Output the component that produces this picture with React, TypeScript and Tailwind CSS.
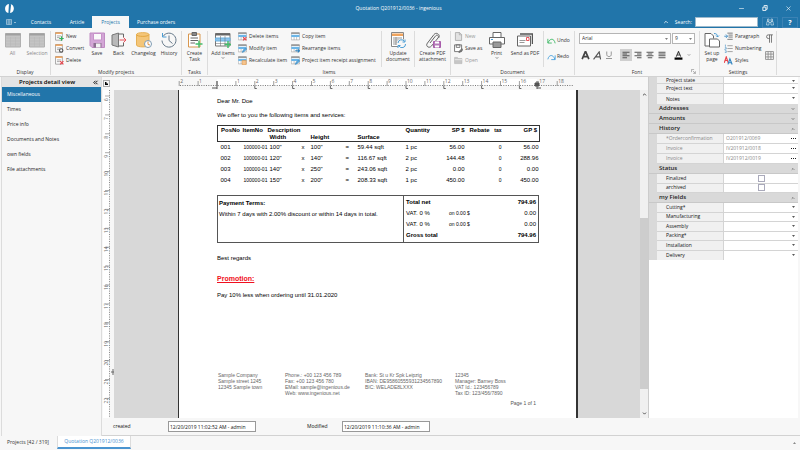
import type { ReactNode } from "react";
import { ChevronDown, ChevronUp, ChevronsLeft, Minus, X } from "lucide-react";

interface IconProps {
  children: ReactNode;
  className?: string;
}

function Icon({ children, className = "size-4" }: IconProps) {
  return (
    <svg viewBox="0 0 32 32" fill="none" stroke="#666" strokeWidth="2" className={`${className} shrink-0`} aria-hidden="true">
      {children}
    </svg>
  );
}

const GreyTable = () => (
  <Icon>
    <path d="M1 3h30v27H1z" fill="#c4c4c4" stroke="#b0b0b0" />
    <path d="M1 5h30" stroke="#a0a0a0" strokeWidth="4" />
    <path d="M1 12h30M1 18h30M1 24h30M11 10v20M21 10v20" stroke="#b6b6b6" strokeWidth="1" />
  </Icon>
);

const SaveIcon = () => (
  <Icon>
    <path d="M2 2h29v29H6l-4-4z" fill="#d3a6d6" stroke="#c08cc3" />
    <path d="M9 3h16v13H9z" fill="#fafafa" stroke="#c792c9" />
    <path d="M9 22h16v9H9z" fill="#8d6f90" stroke="none" />
    <path d="M14 23h9v8h-9z" fill="#f3f3f3" stroke="none" />
  </Icon>
);

const BackIcon = () => (
  <Icon>
    <path d="M16 4h9v7M25 21v7h-9" />
    <path d="M2 6l13-4v28L2 26z" fill="#b9b9b9" stroke="#777" />
    <path d="M17 16h13M25 11l5 5-5 5" stroke="#e8555c" />
  </Icon>
);

const ChangelogIcon = () => (
  <Icon>
    <path d="M1 5c0-5 25-5 25 0v21c0 5-25 5-25 0z" fill="#f4c679" stroke="#e6b055" />
    <path d="M1 5c0 5 25 5 25 0" stroke="#e3a63e" />
    <circle cx="24" cy="24" r="7" fill="#fff" stroke="#7f9bb3" />
    <path d="M24 19v6l4 1" stroke="#e3943e" />
  </Icon>
);

const HistoryIcon = () => (
  <Icon>
    <path d="M4 9a14 14 0 1 1-2 8" stroke="#66798a" />
    <path d="M3 2v8h8" stroke="#4b9dd4" />
    <path d="M16 7v10l7 6" stroke="#66798a" />
  </Icon>
);

const CreateTaskIcon = () => (
  <Icon>
    <path d="M3 4h23v26H3z" fill="#fff" stroke="#d8974f" />
    <path d="M10 1h9v6h-9z" fill="#888" />
    <path d="M7 12h15M7 17h15M7 22h9" />
    <path d="M24 17v14M17 24h14" stroke="#45bd6c" strokeWidth="3" />
  </Icon>
);

const AddItemsIcon = () => (
  <Icon>
    <path d="M1 3h29v25H1z" fill="#fff" stroke="#777" />
    <path d="M1 5h29" stroke="#666" strokeWidth="4" />
    <path d="M1 12h29v6H1z" fill="#8cc5ec" stroke="#6bb0e0" />
    <path d="M1 23h29M11 8v20M20 8v20" strokeWidth="1" />
    <path d="M26 18v14M19 25h14" stroke="#45bd6c" strokeWidth="3" />
  </Icon>
);

const UpdateIcon = () => (
  <Icon>
    <path d="M3 1h24v28H3z" fill="#fff" stroke="#888" />
    <path d="M4 3h22v5H4z" fill="#f0a45e" stroke="none" />
    <path d="M6 12h18M6 16h18M6 20h9M6 24h7M12 10v16" stroke="#999" />
    <circle cx="23" cy="23" r="9" fill="#f7f7f7" stroke="none" />
    <path d="M16 22a7 7 0 0 1 13-3m1-4v5h-5M31 24a7 7 0 0 1-13 4m-2 4v-5h5" stroke="#4b9dd4" />
  </Icon>
);

const ClipIcon = () => (
  <Icon>
    <path d="M10 22L21 8c3-4 8 0 5 4L13 28c-5 6-13 0-8-6L18 5c5-6 14 1 9 7" />
    <path d="M17 19h14v12H17z" fill="#b57ab8" stroke="#a85cab" />
    <path d="M20 19h8v4h-8zM20 27h8v4h-8z" fill="#fff" stroke="none" />
  </Icon>
);

const PrintIcon = () => (
  <Icon>
    <path d="M8 11V1h16v10" fill="#fff" />
    <path d="M1 11h30v13H1z" fill="#fff" />
    <path d="M8 20h16v11H8z" fill="#999" />
    <path d="M4 15h4" stroke="#4b9dd4" />
  </Icon>
);

const SendIcon = () => (
  <Icon>
    <path d="M6 4h25v20" strokeWidth="3" stroke="#555" />
    <path d="M1 8h26v20H1z" fill="#fff" />
    <path d="M5 17h12M5 21h10" stroke="#999" />
    <path d="M19 11h5v6h-5z" fill="#fff" stroke="#e8555c" />
  </Icon>
);

const PageSetupIcon = () => (
  <Icon>
    <path d="M11 28H2V3h12l5 5v5" fill="#fff" />
    <path d="M20 3c5 0 7 2 7 7m-3-3l3 3 3-3" stroke="#4b9dd4" />
    <path d="M11 14h16l4 4v12H11z" fill="#fff" />
  </Icon>
);

function FormIcon({ children }: { children: ReactNode }) {
  return (
    <Icon className="size-[9px]">
      <path d="M2 2h24v27H2z" fill="#fff" stroke="#999" strokeWidth="3" />
      <path d="M1 4h26" stroke="#ef9b4d" strokeWidth="5" />
      <path d="M7 14h14M7 20h10" strokeWidth="3" stroke="#999" />
      {children}
    </Icon>
  );
}

function ItemIcon({ children }: { children: ReactNode }) {
  return (
    <Icon className="size-[9px]">
      <path d="M1 3h29v25H1z" fill="#fff" stroke="#999" strokeWidth="2" />
      <path d="M1 4h29" stroke="#777" strokeWidth="4" />
      <path d="M1 14h29" stroke="#6cb6e8" strokeWidth="8" />
      <path d="M11 18v10M20 18v10" stroke="#999" />
      {children}
    </Icon>
  );
}

const greenPlus = <path d="M23 15v16M15 23h16" stroke="#31b45b" strokeWidth="4" />;
const redCross = <path d="M18 18l12 12M30 18L18 30" stroke="#e8454c" strokeWidth="4" />;
const gear = <circle cx="22" cy="23" r="6" fill="#fff" stroke="#555" strokeWidth="4" />;
const bluePen = <path d="M15 30l3-7 9-9 4 4-9 9z" fill="#5daee3" stroke="#2f83bf" />;
const orangePen = <path d="M15 16h14v15H15z" fill="#f6c48d" stroke="#e09544" />;
const blueArrows = <path d="M15 24h14m-5-6l6 6-6 6" stroke="#2f83bf" strokeWidth="4" />;

const NewDoc = () => (
  <Icon className="size-[9px]">
    <path d="M5 2h15l7 7v21H5z" fill="#e2e2e2" stroke="#aaa" strokeWidth="3" />
    <path d="M19 2v8h8" stroke="#999" />
  </Icon>
);

const SaveAs = () => (
  <Icon className="size-[9px]">
    <path d="M2 3h25v24H2z" fill="#fff" strokeWidth="3" />
    <path d="M8 3h13v9H8z" strokeWidth="3" />
    <path d="M17 31l3-7 8-8 4 4-8 8z" fill="#777" />
  </Icon>
);

const OpenFolder = () => (
  <Icon className="size-[9px]">
    <path d="M2 5h10l3 4h13v18H2z" fill="#c6c6c6" stroke="#b0b0b0" />
    <path d="M3 13h26" stroke="#eee" strokeWidth="3" />
  </Icon>
);

interface SmallItem {
  label: string;
  icon: ReactNode;
  muted?: boolean;
}

const projectActions: SmallItem[] = [
  { label: "New", icon: <FormIcon>{greenPlus}</FormIcon> },
  { label: "Convert", icon: <FormIcon>{gear}</FormIcon> },
  { label: "Delete", icon: <FormIcon>{redCross}</FormIcon> },
];

const itemActions: SmallItem[] = [
  { label: "Delete items", icon: <ItemIcon>{redCross}</ItemIcon> },
  { label: "Modify item", icon: <ItemIcon>{bluePen}</ItemIcon> },
  { label: "Recalculate item", icon: <ItemIcon>{orangePen}</ItemIcon> },
];

const itemTools: SmallItem[] = [
  { label: "Copy item", icon: <ItemIcon>{null}</ItemIcon> },
  { label: "Rearrange items", icon: <ItemIcon>{blueArrows}</ItemIcon> },
  { label: "Project item receipt assignment", icon: <ItemIcon>{bluePen}</ItemIcon> },
];

const documentActions: SmallItem[] = [
  { label: "New", icon: <NewDoc />, muted: true },
  { label: "Save as", icon: <SaveAs /> },
  { label: "Open", icon: <OpenFolder />, muted: true },
];

const settingActions: SmallItem[] = [
  {
    label: "Paragraph",
    icon: (
      <Icon className="size-[9px]">
        <path d="M12 4h19M16 11h15M16 18h15M12 26h19" strokeWidth="3" />
        <path d="M1 15h11M7 9l6 6-6 6" stroke="#2f83bf" strokeWidth="3" />
      </Icon>
    ),
  },
  {
    label: "Numbering",
    icon: (
      <Icon className="size-[9px]">
        <path d="M12 6h19M12 16h19M12 27h19" strokeWidth="2" />
        <path d="M5 2v8M3 13h5v5H3v3M3 24h5v6H3" stroke="#2f83bf" />
      </Icon>
    ),
  },
  {
    label: "Styles",
    icon: (
      <Icon className="size-[9px]">
        <path d="M1 24L8 3l7 21M4 16h9" stroke="#e8454c" strokeWidth="4" />
        <path d="M14 30l7-20 8 20M17 24h10" stroke="#2f83bf" strokeWidth="4" />
      </Icon>
    ),
  },
];

function SmallButtons({ items, className }: { items: SmallItem[]; className: string }) {
  return (
    <div className={`${className} flex shrink-0 flex-col`}>
      {items.map((item) => (
        <button key={item.label} type="button" className={`flex h-3 items-center gap-[2px] whitespace-nowrap ${item.muted ? "text-[#999]" : ""}`}>
          {item.icon}
          {item.label}
        </button>
      ))}
    </div>
  );
}

interface BigButtonProps {
  icon: ReactNode;
  lines: string[];
  className: string;
  menu?: boolean;
}

function BigButton({ icon, lines, className, menu }: BigButtonProps) {
  return (
    <button type="button" className={`${className} flex shrink-0 flex-col items-center pt-[2px]`}>
      {icon}
      <span className="mt-[2px] flex flex-col items-center leading-[6px] whitespace-nowrap">
        {lines.map((line) => (
          <span key={line}>{line}</span>
        ))}
      </span>
      {menu && <ChevronDown className="size-1 text-[#555]" strokeWidth={4} />}
    </button>
  );
}

function Group({ name, children, className = "" }: { name: string; children: ReactNode; className?: string }) {
  return (
    <section aria-label={name} className={`${className} flex shrink-0 flex-col`}>
      <div className="flex h-[38px]">{children}</div>
      <div className="text-center leading-[8px]">{name}</div>
    </section>
  );
}

const Separator = () => <div className="my-[1px] w-px shrink-0 bg-[#dcdcdc]" />;

function AlignIcon({ d }: { d: string }) {
  return (
    <Icon className="size-2">
      <path d={d} stroke="#555" strokeWidth="4" />
    </Icon>
  );
}

function FontGroup() {
  return (
    <Group name="Font" className="w-[124px]">
      <div className="flex flex-1 flex-col px-1 pt-[3px]">
        <div className="flex gap-px">
          <div className="relative flex-1">
            <select aria-label="Font family" className="block h-[11px] w-full appearance-none border border-[#b5b5b5] bg-white px-[2px] text-[5px]">
              <option>Arial</option>
            </select>
            <svg viewBox="0 0 4 2" className="pointer-events-none absolute top-[5px] right-[3px] h-[2px] w-[3px]">
              <path d="M0 0h4L2 2z" fill="#555" />
            </svg>
          </div>
          <div className="relative w-[23px]">
            <select aria-label="Font size" className="block h-[11px] w-full appearance-none border border-[#b5b5b5] bg-white px-[2px] text-[5px]">
              <option>9</option>
            </select>
            <svg viewBox="0 0 4 2" className="pointer-events-none absolute top-[5px] right-[3px] h-[2px] w-[3px]">
              <path d="M0 0h4L2 2z" fill="#555" />
            </svg>
          </div>
        </div>
        <div className="mt-[5px] flex h-3 items-center pl-[2px]">
          <button type="button" aria-label="Bold" className="flex w-3">
            <Icon className="size-[9px]"><path d="M4 29L15 3h2l11 26M8 20h15" stroke="#444" strokeWidth="6" /></Icon>
          </button>
          <button type="button" aria-label="Italic" className="flex w-3">
            <Icon className="size-[9px]"><path d="M2 30L22 3l5 27M10 21h15" stroke="#555" strokeWidth="4" /></Icon>
          </button>
          <button type="button" aria-label="Underline" className="flex w-[15px]">
            <Icon className="size-2"><path d="M7 2v12c0 11 18 11 18 0V2M4 30h24" stroke="#777" strokeWidth="3" /></Icon>
          </button>
          <button type="button" aria-label="Align left" className="flex size-3 items-center justify-center bg-[#cfcfcf]">
            <AlignIcon d="M2 5h28M2 12h18M2 19h28M2 27h18" />
          </button>
          <button type="button" aria-label="Align right" className="flex w-3 justify-center"><AlignIcon d="M2 5h28M12 12h18M2 19h28M12 27h18" /></button>
          <button type="button" aria-label="Center" className="flex w-3 justify-center"><AlignIcon d="M2 5h28M7 12h18M2 19h28M7 27h18" /></button>
          <button type="button" aria-label="Justify" className="flex w-3 justify-center"><AlignIcon d="M2 5h28M2 12h28M2 19h28M2 27h28" /></button>
          <button type="button" aria-label="Font color" className="ml-auto flex items-center gap-1 pr-1">
            <Icon className="size-[9px]"><path d="M8 20L16 2l8 18M11 14h10" stroke="#444" strokeWidth="4" /><path d="M2 27h28" stroke="#000" strokeWidth="8" /></Icon>
            <ChevronDown className="size-1 text-[#777]" strokeWidth={4} />
          </button>
        </div>
      </div>
    </Group>
  );
}

function Ribbon() {
  return (
    <div className="flex h-[49px] shrink-0 overflow-hidden border-b border-[#d2d2d2] bg-[#f7f7f7] pt-[2px] text-[#333]">
      <Group name="Display">
        <div className="flex pl-px text-[#888]">
          <BigButton className="w-[23px]" icon={<GreyTable />} lines={["All"]} />
          <BigButton className="w-[26px]" icon={<GreyTable />} lines={["Selection"]} />
        </div>
      </Group>
      <Separator />
      <Group name="Modify projects">
        <SmallButtons className="w-[36px] pl-1" items={projectActions} />
        <BigButton className="w-[20px]" icon={<SaveIcon />} lines={["Save"]} />
        <BigButton className="w-[23px]" icon={<BackIcon />} lines={["Back"]} />
        <BigButton className="w-[27px]" icon={<ChangelogIcon />} lines={["Changelog"]} />
        <BigButton className="w-[24px]" icon={<HistoryIcon />} lines={["History"]} />
      </Group>
      <Separator />
      <Group name="Tasks">
        <BigButton className="w-[25px]" icon={<CreateTaskIcon />} lines={["Create", "Task"]} />
      </Group>
      <Separator />
      <Group name="Items">
        <BigButton className="w-[30px]" icon={<AddItemsIcon />} lines={["Add items"]} menu />
        <SmallButtons className="w-[53px]" items={itemActions} />
        <SmallButtons className="w-[90px]" items={itemTools} />
        <Separator />
        <BigButton className="w-[32px]" icon={<UpdateIcon />} lines={["Update", "document"]} />
        <Separator />
        <BigButton className="w-[35px]" icon={<ClipIcon />} lines={["Create PDF", "attachment"]} />
      </Group>
      <Separator />
      <Group name="Document">
        <SmallButtons className="w-[35px] pl-[3px]" items={documentActions} />
        <BigButton className="w-[21px]" icon={<PrintIcon />} lines={["Print"]} menu />
        <BigButton className="w-[36px]" icon={<SendIcon />} lines={["Send as PDF"]} />
        <Separator />
        <div className="flex w-[30px] flex-col gap-1 pt-1 pl-[3px]">
          <button type="button" className="flex h-3 items-center gap-px">
            <Icon className="size-[9px]"><path d="M3 10v15h14M4 24C10 8 25 6 29 26" stroke="#31b45b" strokeWidth="3" /></Icon>
            Undo
          </button>
          <button type="button" className="flex h-3 items-center gap-px">
            <Icon className="size-[9px]"><path d="M29 12v15H15M28 26C22 8 7 8 3 26" stroke="#3f9bdb" strokeWidth="3" /></Icon>
            Redo
          </button>
        </div>
      </Group>
      <Separator />
      <FontGroup />
      <button type="button" aria-label="Font settings" className="-ml-2 mb-[2px] flex w-2 items-end">
        <Icon className="size-[5px]"><path d="M3 20V3h17M12 12l16 16M28 14v14H14" strokeWidth="3" /></Icon>
      </button>
      <Separator />
      <Group name="Settings">
        <BigButton className="w-[24px]" icon={<PageSetupIcon />} lines={["Set up", "page"]} />
        <SmallButtons className="w-[38px]" items={settingActions} />
        <div className="flex w-[14px] flex-col items-center gap-2 pt-1">
          <button type="button" aria-label="Formatting marks" className="flex">
            <Icon className="size-[9px]"><path d="M28 3H12a6 6 0 0 0 0 13h4M16 3v28M23 3v28" strokeWidth="3" /></Icon>
          </button>
          <button type="button" aria-label="Grid lines" className="flex">
            <Icon className="size-[9px]"><path d="M2 2h28v28H2zM2 11h28M2 21h28M11 2v28M21 2v28" strokeWidth="3" stroke="#888" /></Icon>
          </button>
        </div>
      </Group>
      <Separator />
    </div>
  );
}

const tabs = [
  { name: "Contacts", className: "w-[42px]" },
  { name: "Article", className: "w-[30px]" },
  { name: "Projects", className: "w-[37px] bg-[#f7f7f7] text-[#2175aa]" },
  { name: "Purchase orders", className: "w-[54px]" },
];

function TitleBar() {
  return (
    <header className="shrink-0 bg-[#2175aa] text-white">
      <div className="flex h-4 items-center">
        <div className="flex-1 pl-[5px]">
          <svg viewBox="0 0 16 16" className="size-[9px]" aria-hidden="true">
            <path d="M7 0C-2 1-2 15 6 16zM9 0c9 1 9 15 0 16L11 0z" fill="#fff" />
          </svg>
        </div>
        <h1 className="text-[5px]">Quotation Q201912/0036 - ingenious</h1>
        <div className="flex flex-1 justify-end gap-[17px] pr-2">
          <button type="button" aria-label="Minimize"><Minus className="size-[7px]" /></button>
          <button type="button" aria-label="Restore">
            <svg viewBox="0 0 14 14" className="size-[6px]" fill="none" stroke="#fff" strokeWidth="2">
              <path d="M2 5h7v8H2zM5 4V1h7v9H9" />
            </svg>
          </button>
          <button type="button" aria-label="Close"><X className="size-[7px]" /></button>
        </div>
      </div>
      <div className="flex h-3 items-stretch">
        <button type="button" aria-label="Menu" className="flex w-5 items-center gap-[2px] pl-[6px]">
          <svg viewBox="0 0 12 12" className="size-[6px]" fill="none" stroke="#e5edf3"><path d="M1 1h10v10H1zM6 1v10M1 4h10M1 8h10" /></svg>
          <svg viewBox="0 0 4 2" className="h-px w-[2px]"><path d="M0 0h4L2 2z" fill="#fff" /></svg>
        </button>
        <nav className="flex flex-1">
          {tabs.map((tab) => (
            <a key={tab.name} href="#" className={`${tab.className} flex items-center justify-center whitespace-nowrap`}>
              {tab.name}
            </a>
          ))}
        </nav>
        <div className="flex items-center pr-[2px]">
          <ChevronUp className="mr-[6px] size-[6px]" strokeWidth={3} />
          <label htmlFor="search" className="mr-[3px]">Search:</label>
          <input id="search" type="text" className="h-[10px] w-[63px] border border-[#9db9cc] bg-white" />
          <button type="button" aria-label="Find" className="ml-1 flex h-[11px] w-4 items-center justify-center border border-[#3b82b4]">
            <svg viewBox="0 0 16 16" className="size-2" fill="none" stroke="#fff" strokeWidth="1">
              <path d="M3 2h3v4H3zM10 2h3v4h-3zM2 7h4v7H1zM10 7h4l1 7h-5zM6 9h4" />
            </svg>
          </button>
          <button type="button" aria-label="Help" className="ml-1 h-[11px] w-4 border border-[#3b82b4] text-[7px] leading-none font-bold">?</button>
        </div>
      </div>
    </header>
  );
}

const views = ["Miscellaneous", "Times", "Price info", "Documents and Notes", "own fields", "File attachments"];

function Sidebar() {
  return (
    <aside className="ml-px flex w-[101px] shrink-0 flex-col border-x border-[#dcdcdc]">
      <div className="flex h-[10px] items-center bg-[#e4e4e4] pr-[2px] text-black">
        <h2 className="flex-1 text-center text-[6px] font-semibold">Projects detail view</h2>
        <ChevronsLeft className="size-[7px]" strokeWidth={3} />
      </div>
      {views.map((view, index) => (
        <a key={view} href="#" className={`flex h-[15px] items-center pl-[5px] ${index === 0 ? "bg-[#2175aa] text-white" : "text-[#222]"}`}>
          {view}
        </a>
      ))}
    </aside>
  );
}

function HorizontalRuler() {
  const marks = Array.from({ length: 21 }, (_, i) => i - 2);
  return (
    <svg viewBox="0 0 397 13" className="h-[13px] w-[397px]" aria-hidden="true">
      <rect x="39" y="2" width="320" height="7" fill="#fff" />
      <path d="M2 8.5h394" stroke="#777" strokeDasharray="1 1.36" />
      {marks.map((n) => {
        const x = 39 + n * 18.9;
        return (
          <g key={n}>
            <path d={`M${x} 4v5`} stroke="#777" strokeWidth="0.7" />
            {n !== 0 && (
              <text x={x + 1} y="6" fontSize="5" fill="#666">
                {Math.abs(n)}
              </text>
            )}
            {n > 0 && n % 2 === 0 && n < 17 && <path d={`M${x} 9v2.5h2`} fill="none" stroke="#666" />}
          </g>
        );
      })}
      <path d="M39 4v8M34 11h5M359 4v8M357 6h4v3h-4zM359 11h4" stroke="#555" fill="#555" />
    </svg>
  );
}

function VerticalRuler() {
  const marks = Array.from({ length: 17 }, (_, i) => i + 6);
  return (
    <svg viewBox="0 0 12 328" className="h-[328px] w-3 shrink-0" aria-hidden="true">
      <rect x="1" width="6" height="328" fill="#fff" />
      <path d="M7.5 0v328" stroke="#888" strokeDasharray="1 1.36" />
      {marks.map((n, i) => (
        <g key={n}>
          <path d={`M3 ${6 + i * 18.9}h5`} stroke="#888" strokeWidth="0.7" />
          <text transform={`translate(6 ${11 + i * 18.9}) rotate(-90)`} fontSize="5" fill="#666">
            {n}
          </text>
        </g>
      ))}
      <path d="M11 279v6M9 282h4" stroke="#666" />
    </svg>
  );
}

const positions = [
  { no: "001", width: '100"', height: '100"', surface: "59.44 sqft", qty: "1 pc", sp: "56.00", gp: "56.00" },
  { no: "002", width: '120"', height: '140"', surface: "116.67 sqft", qty: "2 pc", sp: "144.48", gp: "288.96" },
  { no: "003", width: '140"', height: '250"', surface: "243.06 sqft", qty: "2 pc", sp: "0.00", gp: "0.00" },
  { no: "004", width: '150"', height: '200"', surface: "208.33 sqft", qty: "1 pc", sp: "450.00", gp: "450.00" },
];

const columns = ["w-[23px]", "w-[27px]", "w-[34px]", "w-[9px]", "w-[35px]", "w-[12px]", "w-[48px]", "w-[31px]", "w-[28px]", "w-[25px]", "w-[12px]", "w-[38px]"];

const totals = [
  { label: "Total net", base: "", value: "794.96", bold: true },
  { label: "VAT. 0 %", base: "on 0.00 $", value: "0.00" },
  { label: "VAT. 0 %", base: "on 0.00 $", value: "0.00" },
  { label: "Gross total", base: "", value: "794.96", bold: true },
];

const footer = [
  { className: "w-[67px]", lines: ["Sample Company", "Sample street 1245", "12345 Sample town"] },
  { className: "w-[80px]", lines: ["Phone.: +00 123 456 789", "Fax: +00 123 456 780", "EMail: sample@ingenious.de", "Web: www.ingenious.net"] },
  { className: "w-[90px]", lines: ["Bank: St u Kr Spk Leipzig", "IBAN: DE95860555931234567890", "BIC: WELADE8LXXX"] },
  { className: "w-[66px]", lines: ["12345", "Manager: Barney Boss", "VAT Id.: 123456789", "Tax ID: 123/456/7890"] },
];

function Paper() {
  return (
    <article className="flex w-[400px] shrink-0 flex-col border-r-2 border-l border-[#333] bg-white pr-[36px] pl-[38px] font-['Liberation_Sans',Arial,sans-serif] text-[6px] leading-[7px] text-black">
      <p className="mt-2">Dear Mr. Doe</p>
      <p className="mt-[7px]">We offer to you the following items and services:</p>
      <table className="mt-[6px] w-[322px] table-fixed border-collapse text-left whitespace-nowrap">
        <colgroup>
          {columns.map((column, index) => (
            <col key={index} className={column} />
          ))}
        </colgroup>
        <thead className="border border-[#333]">
          <tr className="h-2 align-bottom">
            <th className="pl-[3px]">PosNo</th>
            <th className="pl-[2px]">ItemNo</th>
            <th colSpan={5}>Description</th>
            <th>Quantity</th>
            <th className="text-right">SP $</th>
            <th className="text-right">Rebate</th>
            <th className="text-right text-[5px]">tax</th>
            <th className="pr-[2px] text-right">GP $</th>
          </tr>
          <tr className="h-2 align-top">
            <th colSpan={2} />
            <th colSpan={2} className="pl-[2px]">Width</th>
            <th colSpan={2}>Height</th>
            <th>Surface</th>
            <th colSpan={5} />
          </tr>
        </thead>
        <tbody>
          {positions.map((row) => (
            <tr key={row.no} className="h-[11px]">
              <td className="pl-[3px]">{row.no}</td>
              <td className="pl-[3px] text-[5px]">100000-01</td>
              <td className="pl-[2px]">{row.width}</td>
              <td>x</td>
              <td>{row.height}</td>
              <td>=</td>
              <td>{row.surface}</td>
              <td>{row.qty}</td>
              <td className="text-right">{row.sp}</td>
              <td />
              <td className="text-right text-[5px]">0</td>
              <td className="pr-px text-right">{row.gp}</td>
            </tr>
          ))}
        </tbody>
      </table>
      <div className="mt-[9px] flex w-[322px] border border-[#555]">
        <div className="flex-1 pt-1 pl-px">
          <p className="font-bold">Payment Terms:</p>
          <p className="mt-1 whitespace-nowrap">Within 7 days with 2.00% discount or within 14 days in total.</p>
        </div>
        <div className="border-l border-[#555] py-px">
          <table className="w-[134px] table-fixed">
            <tbody>
              {totals.map((row, index) => (
                <tr key={index} className={`h-[11px] ${row.bold ? "font-bold" : ""}`}>
                  <td className="w-[45px] pl-[2px]">{row.label}</td>
                  <td className="text-[5px]">{row.base}</td>
                  <td className="pr-[2px] text-right">{row.value}</td>
                </tr>
              ))}
            </tbody>
          </table>
        </div>
      </div>
      <p className="mt-3">Best regards</p>
      <h3 className="mt-[13px] text-[7px] font-bold text-[#f01020] underline">Promotion:</h3>
      <p className="mt-[10px]">Pay 10% less when ordering until 31.01.2020</p>
      <div className="mt-auto flex pl-px text-[5px] leading-[6px] whitespace-nowrap text-[#666]">
        {footer.map((block) => (
          <address key={block.lines[0]} className={`${block.className} shrink-0 not-italic`}>
            {block.lines.map((line) => (
              <div key={line}>{line}</div>
            ))}
          </address>
        ))}
      </div>
      <p className="mt-1 mb-[11px] pr-1 text-right text-[5px] text-[#555]">Page 1 of 1</p>
    </article>
  );
}

function Editor() {
  return (
    <main className="flex min-w-0 flex-1 flex-col border-r border-[#ccc]">
      <div className="flex h-[13px] shrink-0 items-center">
        <button type="button" aria-label="Tab stop" className="ml-px flex size-[7px] shrink-0 items-center justify-center border border-[#aaa]">
          <svg viewBox="0 0 4 4" className="size-[3px]"><path d="M1 0v3h3" stroke="#000" fill="none" strokeWidth="2" /></svg>
        </button>
        <div className="ml-1 flex flex-1 justify-center pr-[10px]">
          <HorizontalRuler />
        </div>
      </div>
      <div className="flex min-h-0 flex-1">
        <VerticalRuler />
        <div className="flex flex-1 justify-center overflow-hidden bg-[#d8d8d8] pl-[2px]">
          <Paper />
        </div>
        <div className="flex w-2 shrink-0 flex-col items-center bg-[#f0f0f0]">
          <ChevronUp className="my-[2px] size-[5px] text-[#333]" strokeWidth={4} />
          <div className="mt-[119px] w-full flex-1 bg-[#cdcdcd]" />
          <ChevronDown className="mt-[22px] mb-[2px] size-[5px] text-[#333]" strokeWidth={4} />
        </div>
      </div>
    </main>
  );
}

function Section({ name, open = false }: { name: string; open?: boolean }) {
  return (
    <button type="button" className="flex h-[10px] w-full shrink-0 items-center border-b border-[#c8c8c8] bg-[#d9d9d9] pr-[3px] pl-[10px] text-[6px] font-semibold text-[#222]">
      <span className="flex-1 text-left">{name}</span>
      {open ? <ChevronUp className="size-1" strokeWidth={3} /> : <ChevronDown className="size-1" strokeWidth={3} />}
    </button>
  );
}

function SelectRow({ name }: { name: string }) {
  return (
    <label className="flex min-h-0 border-b border-[#d4d4d4] last:border-b-0">
      <span className="flex w-[67px] items-center border-r border-[#d4d4d4] bg-[#f0f0f0] pl-[9px] text-[#111]">{name}</span>
      <span className="relative flex flex-1">
        <select className="h-full w-full appearance-none bg-white text-[5px]">
          <option></option>
        </select>
        <svg viewBox="0 0 4 2" className="pointer-events-none absolute top-[3px] right-[3px] h-[2px] w-[3px]">
          <path d="M0 0h4L2 2z" fill="#222" />
        </svg>
      </span>
    </label>
  );
}

const history = [
  ["*Orderconfirmation", "O201912/0069"],
  ["Invoice", "IV201912/0018"],
  ["Invoice", "IV201912/0019"],
];

const rowsClass = "grid shrink-0 border-l-8 border-[#d9d9d9]";

function Properties() {
  return (
    <aside className="mr-[2px] flex w-[149px] shrink-0 flex-col overflow-hidden bg-white">
      <div className={`${rowsClass} h-[27px] grid-rows-[7px_10px_10px]`}>
        {["Project state", "Project text", "Notes"].map((name) => (
          <SelectRow key={name} name={name} />
        ))}
      </div>
      <Section name="Addresses" />
      <Section name="Amounts" />
      <Section name="History" open />
      <div className={`${rowsClass} h-[30px] auto-rows-fr text-[#888]`}>
        {history.map(([name, value]) => (
          <div key={value} className="flex border-b border-[#d4d4d4]">
            <span className="flex w-[67px] items-center border-r border-[#d4d4d4] bg-[#f0f0f0] pl-[9px]">{name}</span>
            <span className="flex flex-1 items-center pl-[2px]">{value}</span>
            <button type="button" aria-label={`Open ${value}`} className="flex items-center pr-[2px]">
              <svg viewBox="0 0 10 2" className="h-px w-[5px]"><path d="M0 0h2v2H0zM4 0h2v2H4zM8 0h2v2H8z" fill="#222" /></svg>
            </button>
          </div>
        ))}
      </div>
      <Section name="Status" open />
      <div className={`${rowsClass} h-[19px] auto-rows-fr`}>
        {["Finalized", "archived"].map((name) => (
          <label key={name} className="flex border-b border-[#d4d4d4]">
            <span className="flex w-[67px] items-center border-r border-[#d4d4d4] bg-[#f0f0f0] pl-[9px] text-[#111]">{name}</span>
            <span className="flex flex-1 items-center justify-center">
              <input type="checkbox" className="size-[7px] appearance-none border border-[#aab] bg-white" />
            </span>
          </label>
        ))}
      </div>
      <Section name="my Fields" open />
      <div className={`${rowsClass} h-[57px] auto-rows-fr`}>
        {["Cutting*", "Manufacturing", "Assembly", "Packing*", "Installation", "Delivery"].map((name) => (
          <SelectRow key={name} name={name} />
        ))}
      </div>
    </aside>
  );
}

function StatusBar() {
  return (
    <div className="flex h-[18px] items-center border-b border-[#d2d2d2] bg-[#f7f7f7] pl-[11px] text-[#111]">
      <label htmlFor="created" className="w-[55px]">created</label>
      <input id="created" type="text" readOnly defaultValue="12/20/2019 11:02:52 AM - admin" className="h-[11px] w-[88px] border border-[#999] bg-white px-px" />
      <label htmlFor="modified" className="ml-[51px] w-[35px]">Modified</label>
      <input id="modified" type="text" readOnly defaultValue="12/20/2019 11:10:36 AM - admin" className="h-[11px] w-[88px] border border-[#999] bg-white px-px" />
    </div>
  );
}

export default function App() {
  return (
    <div className="flex h-screen flex-col overflow-hidden bg-[#f7f7f7] font-['Open_Sans','Noto_Sans',sans-serif] text-[5px] leading-[7px] text-[#333]">
      <TitleBar />
      <Ribbon />
      <div className="flex min-h-0 flex-1">
        <Sidebar />
        <div className="flex min-w-0 flex-1 flex-col">
          <div className="flex min-h-0 flex-1">
            <Editor />
            <Properties />
          </div>
          <StatusBar />
        </div>
      </div>
      <nav className="flex h-[14px] shrink-0 items-stretch pr-1 pb-px pl-[2px]">
        <a href="#" className="flex w-[55px] items-center pl-[5px]">Projects [42 / 319]</a>
        <a href="#" className="flex w-[74px] items-center justify-center border-x border-b-2 border-x-[#dcdcdc] border-b-[#4a94d0] bg-white text-[#3f8fd0]">
          Quotation Q201912/0036
        </a>
        <svg viewBox="0 0 4 2" className="mt-[6px] ml-auto h-[2px] w-[3px]" aria-hidden="true">
          <path d="M0 2h4L2 0z" fill="#666" />
        </svg>
      </nav>
    </div>
  );
}
